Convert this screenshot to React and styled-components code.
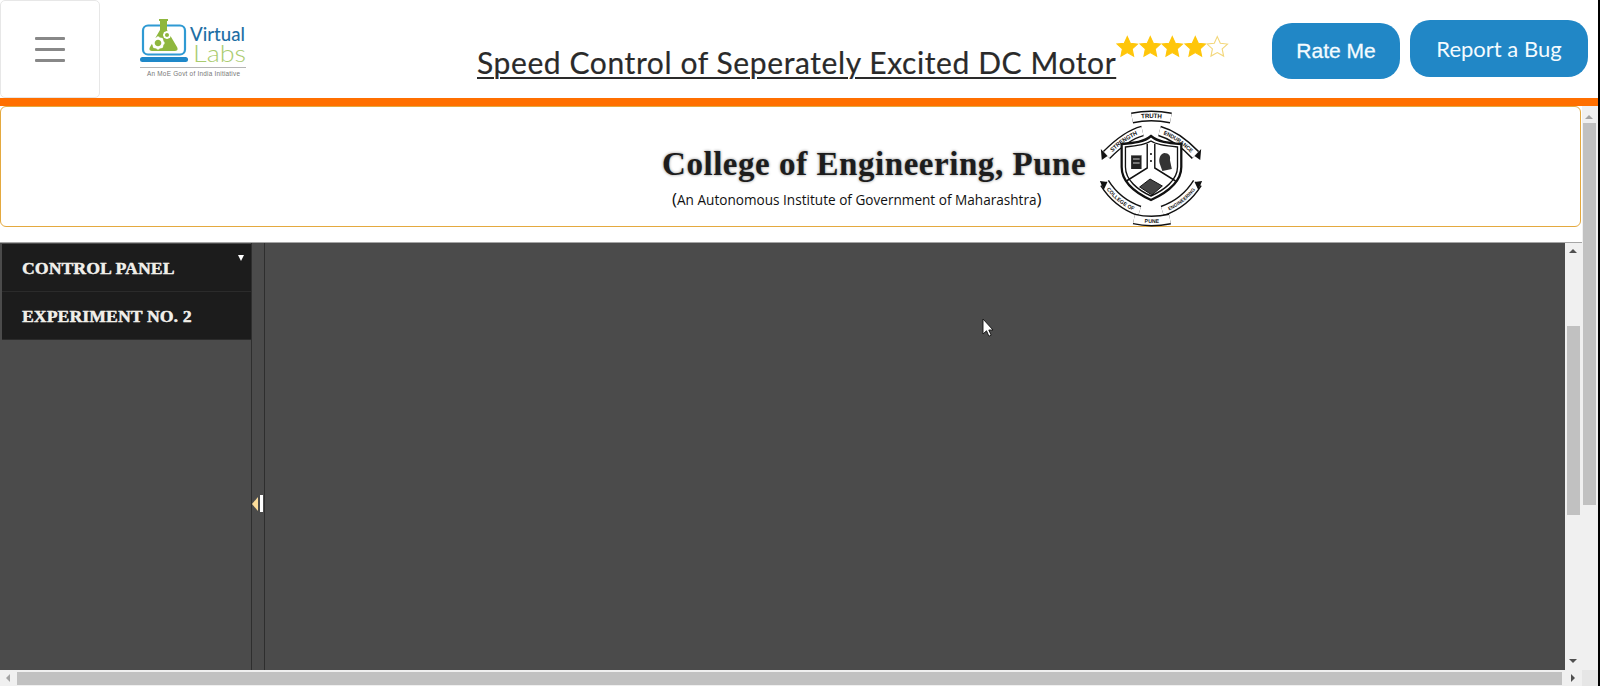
import React from "react";
import styled, { createGlobalStyle } from "styled-components";

const GlobalStyle = createGlobalStyle`
  html, body {
    margin: 0;
    padding: 0;
    height: 686px;
    overflow: hidden;
    background: #000;
  }
  * { box-sizing: border-box; }
`;

const Page = styled.div`
  width: 1598px;
  height: 686px;
  background: #fff;
  display: flex;
  flex-direction: column;
  overflow: hidden;
  font-family: "Lato", "Liberation Sans", sans-serif;
`;

const Header = styled.header`
  height: 98px;
  display: flex;
  align-items: flex-start;
  flex-shrink: 0;
`;

const MenuButton = styled.button`
  width: 100px;
  height: 98px;
  padding: 0;
  background: #fff;
  border: 1px solid #e7e7e7;
  border-radius: 5px;
  display: flex;
  flex-direction: column;
  align-items: center;
  justify-content: center;
  gap: 8px;
  & span {
    display: block;
    width: 30px;
    height: 3px;
    background: #888;
    border-radius: 1px;
  }
`;

const LogoWrap = styled.div`
  margin: 18px 0 0 40px;
  width: 108px;
  height: 62px;
  flex-shrink: 0;
`;

const Title = styled.h1`
  margin: 42px 0 0 229px;
  font-size: 30px;
  line-height: 40px;
  font-weight: 400;
  color: #2a2a2a;
  text-decoration: underline;
  text-decoration-thickness: 2px;
  text-underline-offset: 3px;
  white-space: nowrap;
  width: 638px;
  letter-spacing: 0.6px;
  -webkit-text-stroke: 0.2px #2a2a2a;
`;

const Stars = styled.div`
  display: flex;
  margin: 35px 0 0 1px;
  width: 113px;
  & svg { display: block; margin-right: 0; }
`;

const RoundButton = styled.button`
  height: ${(p) => p.$h}px;
  width: ${(p) => p.$w}px;
  margin-top: ${(p) => p.$top}px;
  margin-left: ${(p) => p.$left}px;
  padding: 0;
  border: none;
  border-radius: 20px;
  background: #2187c6;
  color: #f4fbff;
  font-family: ${(p) => (p.$plain ? '"Liberation Sans", sans-serif' : '"Lato", sans-serif')};
  font-size: ${(p) => p.$size}px;
  -webkit-text-stroke: ${(p) => (p.$plain ? "0.3px #f4fbff" : "0")};
  white-space: nowrap;
`;

const OrangeBar = styled.div`
  height: 8px;
  background: #ff6f00;
  flex-shrink: 0;
`;

const Body = styled.div`
  flex: 1;
  display: flex;
  min-height: 0;
`;

const Main = styled.div`
  width: 1582px;
  display: flex;
  flex-direction: column;
`;

const Banner = styled.section`
  height: 121px;
  width: 1581px;
  margin-bottom: 15px;
  border: 1px solid #e4a93f;
  border-radius: 6px;
  padding-left: 661px;
  display: flex;
  flex-shrink: 0;
`;

const BannerText = styled.div`
  width: 436px;
  display: flex;
  flex-direction: column;
`;

const CollegeName = styled.div`
  margin-top: 39px;
  font-family: "Liberation Serif", serif;
  font-weight: 700;
  font-size: 33px;
  line-height: 36px;
  letter-spacing: 0.55px;
  color: #1d1d1d;
  text-shadow: 0 0 3px #888;
  white-space: nowrap;
`;

const CollegeNote = styled.div`
  margin: 7px 0 0 10px;
  font-family: "Open Sans", sans-serif;
  font-size: 13.6px;
  line-height: 20px;
  color: #111;
  white-space: nowrap;
  & b { font-weight: 400; font-size: 17px; }
`;

const Seal = styled.div`
  width: 106px;
  height: 118px;
  margin-top: 2px;
  flex-shrink: 0;
`;

const Frame = styled.div`
  flex: 1;
  min-height: 0;
  display: flex;
  border-top: 1px solid #a5a5a5;
  position: relative;
`;

const Sidebar = styled.nav`
  width: 251px;
  background: #4b4b4b;
  padding: 1px 0 0 2px;
  flex-shrink: 0;
`;

const NavItem = styled.div`
  width: 249px;
  height: 48px;
  background: #1c1c1c;
  border-bottom: 1px solid #2b2b2b;
  padding: 1px 0 0 20px;
  display: flex;
  align-items: center;
  position: relative;
  font-family: "Liberation Serif", serif;
  font-weight: 700;
  font-size: 17.5px;
  letter-spacing: 0.2px;
  color: #f2efe6;
  -webkit-text-stroke: 0.3px #f2efe6;
  text-shadow: 0.5px 0 0 #8ea0c8;
  white-space: nowrap;
`;

const Caret = styled.i`
  position: absolute;
  top: 11px;
  right: 7px;
  width: 0;
  height: 0;
  border-left: 3.5px solid transparent;
  border-right: 3.5px solid transparent;
  border-top: 6px solid #fff;
`;

const Splitter = styled.div`
  width: 14px;
  background: #4b4b4b;
  border-left: 1px solid #2e2e2e;
  border-right: 1px solid #2e2e2e;
  flex-shrink: 0;
  position: relative;
`;

const SplitArrow = styled.i`
  position: absolute;
  left: 0;
  top: 254px;
  width: 0;
  height: 0;
  border-top: 7px solid transparent;
  border-bottom: 7px solid transparent;
  border-right: 6px solid #fbdc9a;
`;

const SplitGrip = styled.i`
  position: absolute;
  left: 8px;
  top: 252px;
  width: 3px;
  height: 17px;
  background: #fff;
`;

const Canvas = styled.div`
  flex: 1;
  background: #4b4b4b;
`;

const Cursor = styled.svg`
  position: absolute;
  left: 982px;
  top: 75px;
`;

const VScroll = styled.div`
  width: ${(p) => p.$w}px;
  background: #f0f0f0;
  flex-shrink: 0;
  display: flex;
  flex-direction: column;
  align-items: ${(p) => (p.$center ? "center" : "flex-start")};
  padding-left: ${(p) => (p.$center ? 0 : 1)}px;
  position: relative;
`;

const VThumb = styled.div`
  width: 13px;
  height: ${(p) => p.$h}px;
  margin-top: ${(p) => p.$top}px;
  background: #c1c1c1;
`;

const ArrowUp = styled.i`
  position: absolute;
  top: ${(p) => p.$top}px;
  left: ${(p) => p.$left}px;
  width: 0;
  height: 0;
  border-left: 4px solid transparent;
  border-right: 4px solid transparent;
  border-bottom: 4px solid ${(p) => p.$c};
`;

const ArrowDown = styled.i`
  position: absolute;
  bottom: 7px;
  left: ${(p) => p.$left}px;
  width: 0;
  height: 0;
  border-left: 4px solid transparent;
  border-right: 4px solid transparent;
  border-top: 4px solid #505050;
`;

const HScroll = styled.div`
  height: 16px;
  background: #f0f0f0;
  flex-shrink: 0;
  display: flex;
  align-items: center;
  padding-left: 6px;
`;

const ArrowLeft = styled.i`
  width: 0;
  height: 0;
  border-top: 4px solid transparent;
  border-bottom: 4px solid transparent;
  border-right: 4px solid #a3a3a3;
`;

const ArrowRight = styled.i`
  width: 0;
  height: 0;
  margin-left: 9px;
  border-top: 4px solid transparent;
  border-bottom: 4px solid transparent;
  border-left: 4px solid #505050;
`;

const HThumb = styled.div`
  width: 1545px;
  height: 13px;
  margin: 1px 0 0 7px;
  background: #c1c1c1;
`;

const OuterColumn = styled.div`
  width: 16px;
  display: flex;
  flex-direction: column;
`;

const OuterTrack = styled(VScroll)`
  flex: 1;
  width: 16px;
`;

const ScrollCorner = styled.div`
  height: 16px;
  background: #e6e6e6;
`;

const Star = ({ filled }) => (
  <svg width="23" height="23" viewBox="0 0 24 24">
    <path
      d="M12 1.5l3.2 7 7.6.9-5.6 5.2 1.5 7.6L12 18.4l-6.7 3.8 1.5-7.6L1.2 9.4l7.6-.9z"
      fill={filled ? "#ffc60a" : "#fff"}
      stroke={filled ? "#ffc60a" : "#f3d77a"}
      strokeWidth="1.2"
    />
  </svg>
);

const Gear = ({ x, y, r, fill = "#fff" }) => (
  <g transform={`translate(${x} ${y})`}>
    <circle r={r * 0.72} fill="none" stroke={fill} strokeWidth={r * 0.42} />
    {[0, 45, 90, 135, 180, 225, 270, 315].map((a) => (
      <rect key={a} x={-r * 0.18} y={-r} width={r * 0.36} height={r * 0.36} fill={fill} transform={`rotate(${a})`} />
    ))}
  </g>
);

const VirtualLabsLogo = () => (
  <svg width="108" height="62" viewBox="0 0 108 62" style={{ display: "block" }}>
    <rect x="3" y="7.5" width="42" height="29" rx="5" fill="none" stroke="#2f9ad3" strokeWidth="2.2" />
    <rect x="0" y="39" width="48" height="5" rx="2.5" fill="#1f88c9" />
    <path d="M19 1h9v2h-1v9l10 17c1.500 3 0 4-3 4H13c-3 0-4.500-1-3-4l10-17V3h-1z" fill="#8fb73e" />
    <Gear x="18" y="25" r="6.5" />
    <Gear x="27" y="17" r="4" />
    <text x="50" y="23" fontFamily="Lato, sans-serif" fontSize="20" fontWeight="500" fill="#1f6fa5" textLength="55" lengthAdjust="spacingAndGlyphs">Virtual</text>
    <text x="53" y="44" fontFamily="Lato, sans-serif" fontWeight="300" fontSize="24" fill="#a9cb6e" textLength="53" lengthAdjust="spacingAndGlyphs">Labs</text>
    <line x1="0" x2="106" y1="49.5" y2="49.5" stroke="#b5b5b5" strokeWidth="1" />
    <text x="7" y="58" fontFamily="Liberation Sans, sans-serif" fontSize="6.4" fill="#777" textLength="93">An MoE Govt of India Initiative</text>
  </svg>
);

const Ribbon = ({ id, d, label, size = 6 }) => (
  <g>
    <path d={d} fill="none" stroke="#111" strokeWidth="11" />
    <path d={d} fill="none" stroke="#fff" strokeWidth="8" />
    <path id={id} d={d} fill="none" />
    <text fontFamily="Liberation Sans, sans-serif" fontWeight="700" fontSize={size} fill="#111" textAnchor="middle" dy="2">
      <textPath href={`#${id}`} startOffset="50%">{label}</textPath>
    </text>
  </g>
);

const CollegeSeal = () => (
  <svg width="106" height="118" viewBox="0 0 112 118" preserveAspectRatio="none" style={{ display: "block" }}>
    <Ribbon id="r-top" d="M36 9Q56 5 77 9" label="TRUTH" size={6.5} />
    <Ribbon id="r-left" d="M9 46Q30 26 47 22" label="STRENGTH" size={6} />
    <Ribbon id="r-right" d="M65 22Q84 27 103 46" label="ENDURANCE" size={5.6} />
    <Ribbon id="r-ll" d="M7 74Q20 94 44 102" label="COLLEGE OF" size={5.4} />
    <Ribbon id="r-lr" d="M68 102Q92 94 105 74" label="ENGINEERING" size={4.9} />
    <Ribbon id="r-bot" d="M38 110Q56 114 76 110" label="PUNE" size={5.5} />
    <path d="M3 40l7 7-6 4zM109 40l-7 7 6 4zM2 72l8 1-4 8zM110 72l-8 1 4 8z" fill="#111" />
    <path d="M25 35C38 34 49 33 56 27C63 33 74 34 88 35L88 58C88 74 72 84 56 91C40 84 25 74 25 58Z" fill="#fff" stroke="#111" strokeWidth="2.4" />
    <path d="M29 38C40 37 50 36 56 32C62 36 72 37 84 38L84 58C84 71 70 81 56 87C42 81 29 71 29 58Z" fill="#fff" stroke="#111" strokeWidth="1.4" />
    <path d="M52 35V59L30 72M60 35V59L82 72" fill="none" stroke="#111" strokeWidth="1.5" />
    <rect x="35" y="46" width="11" height="14" fill="#222" />
    <path d="M35 46h11M37 50h7M37 54h7" stroke="#fff" strokeWidth="0.8" />
    <path d="M70 44c5 0 7 3 6 7l2 9-10 2-3-8c-1-5 1-9 5-10z" fill="#333" />
    <path d="M44 78l11-8 13 7-11 9z" fill="#444" stroke="#111" strokeWidth="1" />
    <circle cx="56" cy="45" r="1.1" fill="#111" />
    <circle cx="56" cy="52" r="1.1" fill="#111" />
  </svg>
);

const App = () => {
  return (
    <Page>
      <GlobalStyle />
      <Header>
        <MenuButton aria-label="menu">
          <span />
          <span />
          <span />
        </MenuButton>
        <LogoWrap>
          <VirtualLabsLogo />
        </LogoWrap>
        <Title>Speed Control of Seperately Excited DC Motor</Title>
        <Stars>
          <Star filled />
          <Star filled />
          <Star filled />
          <Star filled />
          <Star />
        </Stars>
        <RoundButton $w={128} $h={56} $top={23} $left={43} $size={21} $plain>Rate Me</RoundButton>
        <RoundButton $w={178} $h={57} $top={20} $left={10} $size={22}>Report a Bug</RoundButton>
      </Header>
      <OrangeBar />
      <Body>
        <Main>
          <Banner>
            <BannerText>
              <CollegeName>College of Engineering, Pune</CollegeName>
              <CollegeNote><b>(</b>An Autonomous Institute of Government of Maharashtra<b>)</b></CollegeNote>
            </BannerText>
            <Seal>
              <CollegeSeal />
            </Seal>
          </Banner>
          <Frame>
            <Sidebar>
              <NavItem>CONTROL PANEL<Caret /></NavItem>
              <NavItem>EXPERIMENT NO. 2</NavItem>
            </Sidebar>
            <Splitter>
              <SplitArrow />
              <SplitGrip />
            </Splitter>
            <Canvas />
            <VScroll $w={17} $center>
              <ArrowUp $top={6} $left={4} $c="#505050" />
              <VThumb $top={83} $h={189} />
              <ArrowDown $left={4} />
            </VScroll>
            <Cursor width="12" height="20" viewBox="0 0 12 20">
              <path d="M1 1v15l3.5-3.2 2.4 5.4 2.3-1-2.4-5.2H11z" fill="#fff" stroke="#111" strokeWidth="0.9" />
            </Cursor>
          </Frame>
          <HScroll>
            <ArrowLeft />
            <HThumb />
            <ArrowRight />
          </HScroll>
        </Main>
        <OuterColumn>
          <OuterTrack $w={16}>
            <ArrowUp $top={9} $left={3} $c="#a3a3a3" />
            <VThumb $top={17} $h={382} />
          </OuterTrack>
          <ScrollCorner />
        </OuterColumn>
      </Body>
    </Page>
  );
};

export default App;
